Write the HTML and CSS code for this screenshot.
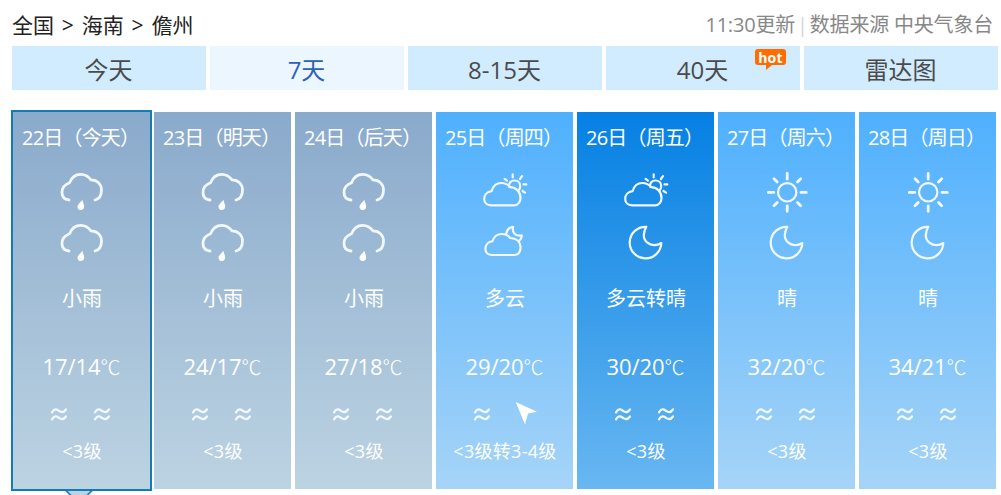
FILE: index.html
```html
<!DOCTYPE html>
<html lang="zh-CN">
<head>
    <meta charset="UTF-8">
    <meta name="viewport" content="width=device-width, initial-scale=1.0">
    <title>儋州天气预报</title>
    <link rel="stylesheet" href="styles.css">
</head>
<body>
    <svg class="sprite">
        <symbol id="rain" viewBox="0 0 51 51">
            <path class="thick" d="M13 33C8.500 32.500 6 29.500 6 25.500C6 21 9 17.500 13.500 15.800C15.500 10.500 19.500 7.300 24.800 7.300C29.500 7.300 32.500 9.500 35 12.900C41.500 12.900 45.500 17.500 45.500 23C45.500 28.500 43 32 39 33"/>
            <path class="solid" d="M26.400 32.800C27 35.800 28.200 37.500 28.200 39.600C28.200 41.700 26.900 43 24.900 43C23 43 21.500 41.800 21.500 39.900C21.500 37.500 24 36 26.400 32.800Z"/>
        </symbol>
        <symbol id="cloud-sun" viewBox="0 0 51 51">
            <path d="M12 38.300C8 38.300 5.200 35.600 5.200 32C5.200 28 8 24.800 12.600 24.200C14 19 17.500 16 22.300 16C26 16 29 17.500 31 20.200C37.500 20.400 41.500 25 41.500 31C41.500 34.500 39.500 38.300 35.300 38.300Z"/>
            <path d="M30.400 20C29.300 16 31.800 13.500 35.500 13.500C39 13.500 41.200 16 41.200 19C41.200 21 40.700 22.800 39.300 24"/>
            <path d="M25.600 11.800L28 13.600M33.700 7.400V10.400M43 9.200L40.900 12M44.500 17.400H47.300M43.500 24L46 25.700"/>
        </symbol>
        <symbol id="cloud-moon" viewBox="0 0 51 51">
            <path d="M13 37C9 37 6.400 34.400 6.400 31C6.400 26.800 9.300 23.700 13.500 23.200C15 18.500 18 16 22.800 16C26.500 16 29.300 17.300 31.200 20C37.500 20.200 41.500 24 41.500 29.800C41.500 33.500 39.500 37 35.500 37Z"/>
            <path d="M27.300 15.500C28 11.800 30.300 9.300 34.200 8.800C32.700 14.500 36.400 18.600 42.800 17.400C42.800 19.700 41.800 21.500 40 23"/>
        </symbol>
        <symbol id="sun" viewBox="0 0 51 51">
            <circle cx="26.200" cy="25.300" r="9.200"/>
            <path class="thick" d="M26.200 6.500V12.200M26.200 38.800V44.300M7.300 25.400H12.800M40 25.400H45.300M13 11.800L16.200 15M39.700 11.800L36.500 15M13 38.700L16.200 35.500M39.700 38.700L36.500 35.500"/>
        </symbol>
        <symbol id="moon" viewBox="0 0 51 51">
            <path d="M26.300 8.800A15.800 15.800 0 1 0 41.300 25C32 31 18.500 23.500 26.300 8.800Z"/>
        </symbol>
        <symbol id="calm" viewBox="0 0 24 24">
            <path d="M5 10.300C8 5.500 10.500 8 12.500 9.200C14.500 10.500 17 10.300 19 7.500M5 17.300C8 12.500 10.500 15 12.500 16.200C14.500 17.500 17 17.300 19 14.500"/>
        </symbol>
        <symbol id="northwest" viewBox="0 0 24 24">
            <path class="solid" d="M2.700 0L24 9.700L15 11.500L12 22.500Z"/>
        </symbol>
    </svg>

    <div class="top">
        <div class="crumbs">全国 &gt; 海南 &gt; 儋州</div>
        <div class="update">11:30更新<i>|</i>数据来源 中央气象台</div>
    </div>

    <div class="tabs">
        <div class="tab">今天</div>
        <div class="tab on">7天</div>
        <div class="tab">8-15天</div>
        <div class="tab">40天<span class="hot">hot</span></div>
        <div class="tab">雷达图</div>
    </div>

    <div class="days">
        <div class="day rainy current">
            <h1>22日（今天）</h1>
            <svg class="icon"><use href="#rain"/></svg>
            <svg class="icon"><use href="#rain"/></svg>
            <p class="wea">小雨</p>
            <p class="tem">17/14<span>℃</span></p>
            <div class="wind"><svg><use href="#calm"/></svg><svg><use href="#calm"/></svg></div>
            <p class="level">&lt;3级</p>
        </div>
        <div class="day rainy">
            <h1>23日（明天）</h1>
            <svg class="icon"><use href="#rain"/></svg>
            <svg class="icon"><use href="#rain"/></svg>
            <p class="wea">小雨</p>
            <p class="tem">24/17<span>℃</span></p>
            <div class="wind"><svg><use href="#calm"/></svg><svg><use href="#calm"/></svg></div>
            <p class="level">&lt;3级</p>
        </div>
        <div class="day rainy">
            <h1>24日（后天）</h1>
            <svg class="icon"><use href="#rain"/></svg>
            <svg class="icon"><use href="#rain"/></svg>
            <p class="wea">小雨</p>
            <p class="tem">27/18<span>℃</span></p>
            <div class="wind"><svg><use href="#calm"/></svg><svg><use href="#calm"/></svg></div>
            <p class="level">&lt;3级</p>
        </div>
        <div class="day">
            <h1>25日（周四）</h1>
            <svg class="icon"><use href="#cloud-sun"/></svg>
            <svg class="icon"><use href="#cloud-moon"/></svg>
            <p class="wea">多云</p>
            <p class="tem">29/20<span>℃</span></p>
            <div class="wind"><svg><use href="#calm"/></svg><svg><use href="#northwest"/></svg></div>
            <p class="level">&lt;3级转3-4级</p>
        </div>
        <div class="day hover">
            <h1>26日（周五）</h1>
            <svg class="icon"><use href="#cloud-sun"/></svg>
            <svg class="icon"><use href="#moon"/></svg>
            <p class="wea">多云转晴</p>
            <p class="tem">30/20<span>℃</span></p>
            <div class="wind"><svg><use href="#calm"/></svg><svg><use href="#calm"/></svg></div>
            <p class="level">&lt;3级</p>
        </div>
        <div class="day">
            <h1>27日（周六）</h1>
            <svg class="icon"><use href="#sun"/></svg>
            <svg class="icon"><use href="#moon"/></svg>
            <p class="wea">晴</p>
            <p class="tem">32/20<span>℃</span></p>
            <div class="wind"><svg><use href="#calm"/></svg><svg><use href="#calm"/></svg></div>
            <p class="level">&lt;3级</p>
        </div>
        <div class="day">
            <h1>28日（周日）</h1>
            <svg class="icon"><use href="#sun"/></svg>
            <svg class="icon"><use href="#moon"/></svg>
            <p class="wea">晴</p>
            <p class="tem">34/21<span>℃</span></p>
            <div class="wind"><svg><use href="#calm"/></svg><svg><use href="#calm"/></svg></div>
            <p class="level">&lt;3级</p>
        </div>
    </div>
</body>
</html>
```
FILE: styles.css
```css
body {
    margin: 0;
    height: 495px;
    overflow: hidden;
    background: #fff;
    font-family: "Open Sans", "Noto Sans CJK SC", sans-serif;
}

h1, p {
    margin: 0;
    font-weight: normal;
}

.sprite {
    display: none;
}

/* breadcrumb and update time */
.top {
    display: flex;
    justify-content: space-between;
    height: 46px;
    padding: 0 8px 0 12px;
    line-height: 50px;
    box-sizing: border-box;
    white-space: nowrap;
}

.crumbs {
    font-size: 21px;
    word-spacing: 2.4px;
    color: #222;
}

.update {
    font-size: 20px;
    letter-spacing: -0.2px;
    color: #888;
}

.update i {
    margin: 0 2px;
    font-style: normal;
    color: #d3d3df;
}

/* tabs */
.tabs {
    display: flex;
    gap: 4px;
    padding-left: 12px;
}

.tab {
    position: relative;
    width: 194px;
    height: 44px;
    padding-right: 1px;
    box-sizing: border-box;
    line-height: 48px;
    background: #d1ebff;
    color: #4b4b4b;
    font-size: 24px;
    text-align: center;
}

.tab.on {
    background: #ebf6ff;
    color: #2f61b4;
}

.hot {
    position: absolute;
    right: 14px;
    top: 3px;
    width: 31px;
    height: 16px;
    border-radius: 3px;
    background: #ff6c00;
    color: #fff;
    font: bold 14px/17px "Open Sans", sans-serif;
    letter-spacing: 0.2px;
}

.hot::after {
    content: "";
    position: absolute;
    left: 11px;
    top: 16px;
    border-top: 5px solid #ff6c00;
    border-right: 6px solid transparent;
}

/* 7 day list */
.days {
    display: flex;
    gap: 4px;
    padding: 22px 0 0 13px;
}

.day {
    display: flex;
    flex-direction: column;
    align-items: center;
    width: 137px;
    height: 377px;
    background: linear-gradient(#4fb0fe, #a6d4f7);
    color: #fff;
    white-space: nowrap;
}

.day.rainy {
    background: linear-gradient(#8aaacc, #bcd3e2);
}

.day.hover {
    background: linear-gradient(#0580e3, #68b7f1);
}

.day.current {
    position: relative;
    box-shadow: 0 0 0 2px #147cb4;
}

.day.current::after {
    content: "";
    position: absolute;
    left: 56px;
    top: 369px;
    width: 20px;
    height: 20px;
    box-sizing: border-box;
    border: 2px solid #2f7fc1;
    background: #bcd3e5;
    transform: rotate(45deg);
    clip-path: polygon(100% 0, 100% 100%, 0 100%);
}

.day h1 {
    align-self: flex-start;
    padding-left: 9px;
    margin-bottom: 3px;
    font-size: 20px;
    line-height: 52px;
    letter-spacing: -0.8px;
}

.day svg {
    fill: none;
    stroke: #f2f8ff;
    stroke-width: 2.2;
    stroke-linecap: round;
    stroke-linejoin: round;
}

.thick {
    stroke-width: 2.8;
}

.solid {
    fill: #fff;
    stroke: none;
}

.icon {
    width: 51px;
    height: 51px;
}

.wea {
    padding-left: 1px;
    font-size: 20px;
    line-height: 60px;
}

.tem {
    margin-top: 7px;
    font-size: 22px;
    font-weight: 500;
    line-height: 60px;
    letter-spacing: -0.1px;
}

.tem span {
    font-family: "Noto Sans CJK SC", sans-serif;
    font-size: 20px;
    font-weight: 300;
}

.wind {
    display: flex;
    gap: 19px;
    height: 33px;
    padding: 1px 3px 0 0;
    box-sizing: border-box;
}

.wind svg {
    width: 24px;
    height: 24px;
    margin-top: 4px;
}

.level {
    padding-left: 1px;
    font-size: 18px;
    line-height: 42px;
    letter-spacing: 0.3px;
}
```
